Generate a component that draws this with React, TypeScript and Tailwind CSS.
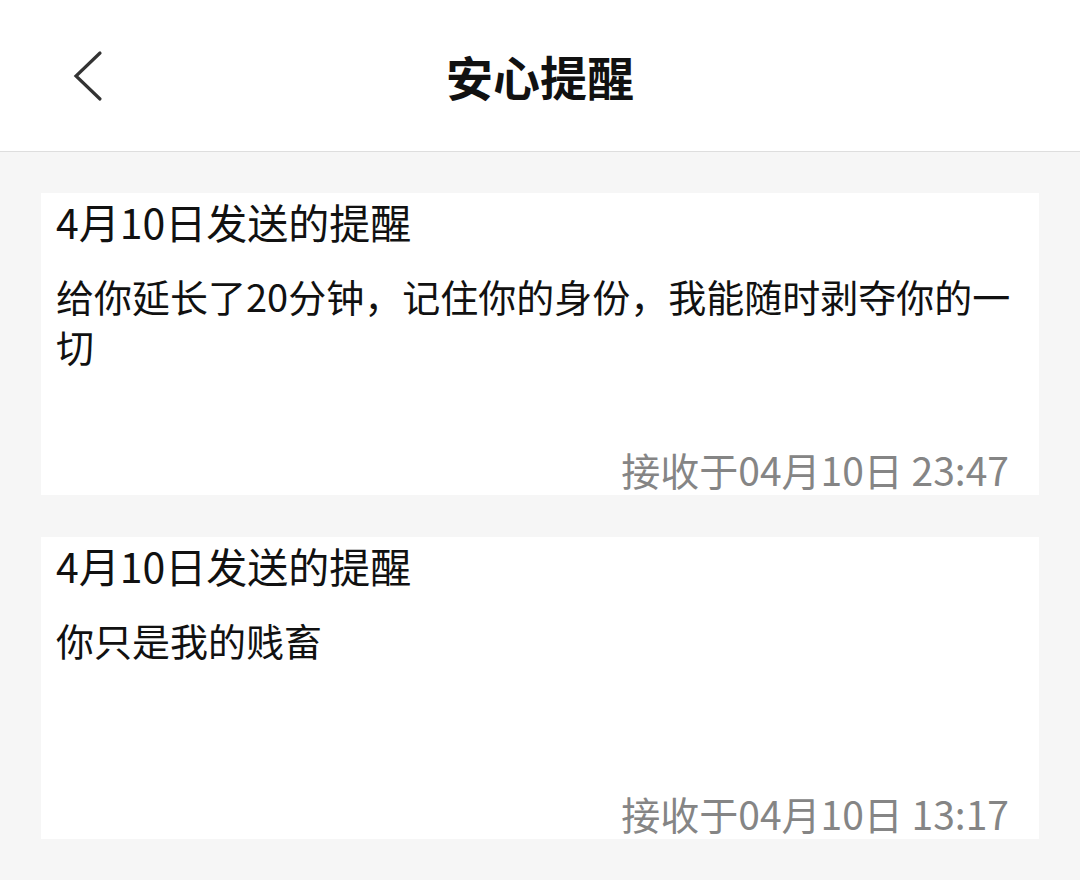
import React from "react";

const FONT = { fontFamily: '"Noto Sans CJK SC", "Noto Sans", sans-serif' };

type Item = { title: string; body: string; time: string };

const items: Item[] = [
  {
    title: "4月10日发送的提醒",
    body: "给你延长了20分钟，记住你的身份，我能随时剥夺你的一切",
    time: "接收于04月10日 23:47",
  },
  {
    title: "4月10日发送的提醒",
    body: "你只是我的贱畜",
    time: "接收于04月10日 13:17",
  },
];

function Card({ item }: { item: Item }) {
  return (
    <div className="bg-white h-[302px] flex flex-col pl-[15px] pr-[14px] pt-[3px]">
      <div className="text-[41px] leading-[50px] text-[#111]">{item.title}</div>
      <div className="mt-[25px] text-[38px] leading-[50px] text-[#111]">{item.body}</div>
      <div className="mt-auto text-right text-[39px] leading-[50px] text-[#858585] pr-[16px] pb-[1px]">{item.time}</div>
    </div>
  );
}

export default function App() {
  return (
    <div className="w-[1080px] h-[880px] bg-[#f6f6f6] overflow-hidden" style={FONT}>
      <div className="relative h-[152px] bg-white border-b border-[#dedede] flex items-center justify-center">
        <svg
          className="absolute left-[70px] top-[49px]"
          width="36"
          height="54"
          viewBox="0 0 36 54"
          fill="none"
        >
          <path d="M30 4 L6 27 L30 50" stroke="#333" strokeWidth="3.2" strokeLinecap="round" strokeLinejoin="miter" />
        </svg>
        <div className="text-[47px] font-bold text-[#111] leading-none">安心提醒</div>
      </div>
      <div className="flex flex-col gap-[42px] pt-[41px] px-[41px]">
        {items.map((it, i) => (
          <Card key={i} item={it} />
        ))}
      </div>
    </div>
  );
}
